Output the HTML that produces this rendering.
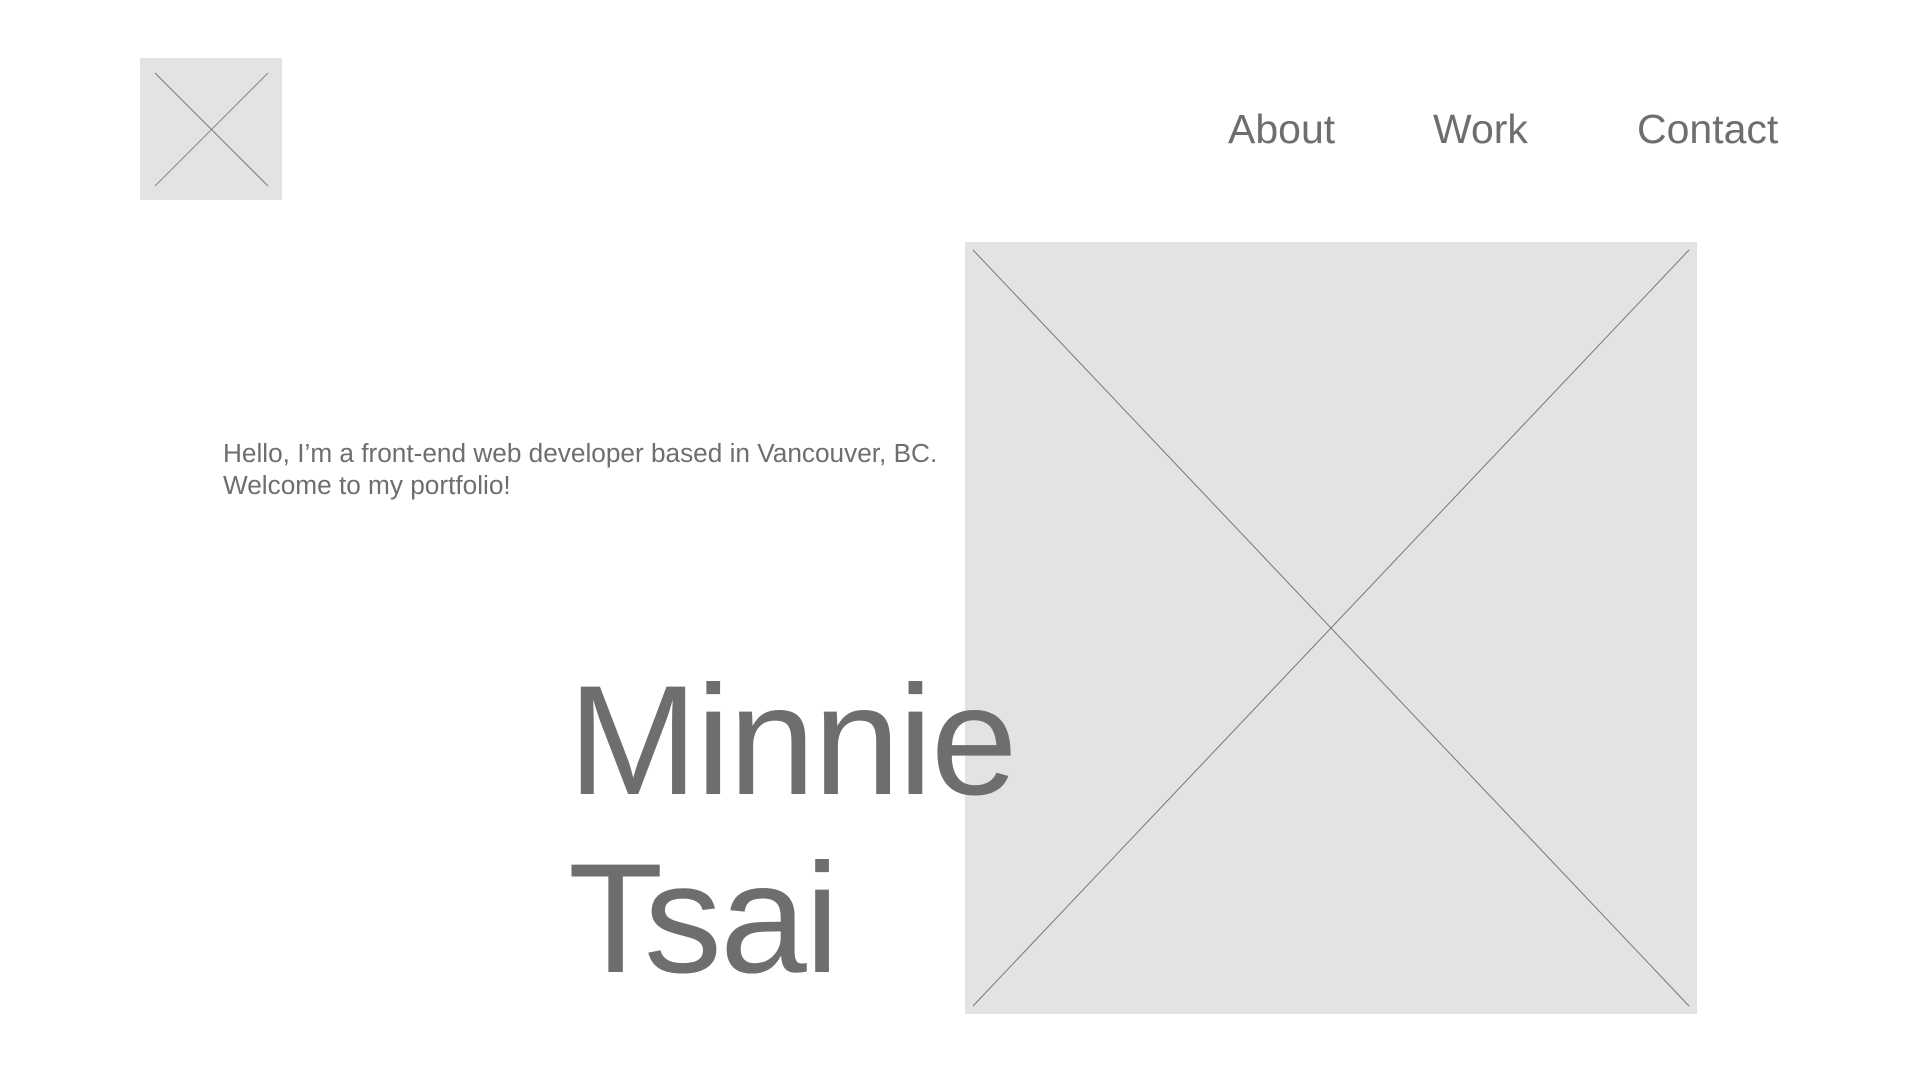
<!DOCTYPE html>
<html><head><meta charset="utf-8"><style>
html,body{margin:0;padding:0;background:#fff;width:1920px;height:1080px;overflow:hidden;font-family:"Liberation Sans",Arial,sans-serif;color:#6e6e6e}
.abs{position:absolute}
nav a{position:absolute;top:104px;font-size:41px;color:#6e6e6e;text-decoration:none;line-height:50px}
</style></head><body>
<svg class="abs" style="left:140px;top:58px" width="142" height="142"><rect width="142" height="142" fill="#e4e3e4"/><line x1="15" y1="15" x2="128" y2="128" stroke="#777" stroke-width="1"/><line x1="128" y1="15" x2="15" y2="128" stroke="#888" stroke-width="1"/></svg>
<nav><a style="left:1228px">About</a><a style="left:1433px">Work</a><a style="left:1637px">Contact</a></nav>
<svg class="abs" style="left:965px;top:242px" width="732" height="772"><rect width="732" height="772" fill="#e4e3e4"/><line x1="8" y1="8" x2="724" y2="764" stroke="#777" stroke-width="1"/><line x1="724" y1="8" x2="8" y2="764" stroke="#777" stroke-width="1"/></svg>
<div class="abs" style="left:223px;top:437px;font-size:26.2px;line-height:32px">Hello, I’m a front-end web developer based in Vancouver, BC.<br>Welcome to my portfolio!</div>
<div class="abs" style="left:568px;top:652px;font-size:156px;line-height:178px;letter-spacing:-2px">Minnie<br>Tsai</div>
</body></html>
